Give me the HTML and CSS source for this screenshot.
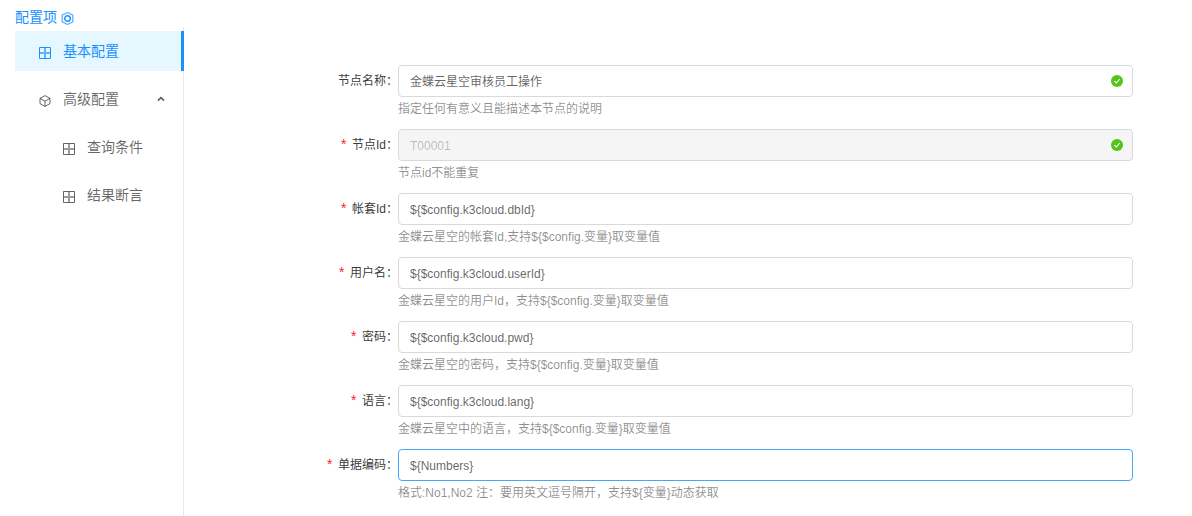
FILE: index.html
```html
<!DOCTYPE html>
<html lang="zh-CN">
<head>
<meta charset="utf-8">
<title>配置项</title>
<link rel="stylesheet" href="styles.css">
</head>
<body>
<div class="page">
  <h3 class="title">配置项
    <svg class="title-icon" viewBox="0 0 12 12"><path d="M6 .5 10.9 3v6L6 11.5 1.1 9V3z" fill="none" stroke="currentColor" stroke-width="1.2" opacity=".7"/><circle cx="6" cy="6" r="2.6" fill="none" stroke="currentColor" stroke-width="1.3"/></svg>
  </h3>
  <div class="main">
    <nav class="sider">
      <ul class="menu">
        <li class="item active">
          <svg class="ico" viewBox="0 0 12 12"><path d="M.5.5h11v11H.5z" fill="none" stroke="currentColor"/><path d="M6 1v10M1 6h10" fill="none" stroke="currentColor" stroke-width="2" opacity=".65"/></svg>
          <span class="item-text">基本配置</span>
        </li>
        <li class="item">
          <svg class="ico" viewBox="0 0 12 12"><path d="M6 .6 11 3.4v5.2L6 11.4 1 8.6V3.4zM1 3.4 6 6.2l5-2.8M6 6.2v5.2" fill="none" stroke="currentColor"/></svg>
          <span class="item-text">高级配置</span>
          <svg class="arrow" viewBox="0 0 8 6"><path d="M1 4.6 4 1.6l3 3" fill="none" stroke="currentColor" stroke-width="1.5"/></svg>
        </li>
        <li class="item sub">
          <svg class="ico" viewBox="0 0 12 12"><path d="M.5.5h11v11H.5z" fill="none" stroke="currentColor"/><path d="M6 1v10M1 6h10" fill="none" stroke="currentColor" stroke-width="2" opacity=".65"/></svg>
          <span class="item-text">查询条件</span>
        </li>
        <li class="item sub">
          <svg class="ico" viewBox="0 0 12 12"><path d="M.5.5h11v11H.5z" fill="none" stroke="currentColor"/><path d="M6 1v10M1 6h10" fill="none" stroke="currentColor" stroke-width="2" opacity=".65"/></svg>
          <span class="item-text">结果断言</span>
        </li>
      </ul>
    </nav>
    <form class="form">
      <div class="row">
        <label class="label">节点名称：</label>
        <div class="control">
          <div class="input"><span class="cjk">金蝶云星空审核员工操作</span><svg class="check" viewBox="0 0 14 14"><circle cx="7" cy="7" r="6" fill="#52c41a"/><path d="M4.4 7.1 6.3 9l3.4-3.8" fill="none" stroke="#fff" stroke-width="1.1"/></svg></div>
          <div class="help">指定任何有意义且能描述本节点的说明</div>
        </div>
      </div>
      <div class="row">
        <label class="label req">节点Id：</label>
        <div class="control">
          <div class="input disabled"><span class="latin">T00001</span><svg class="check" viewBox="0 0 14 14"><circle cx="7" cy="7" r="6" fill="#52c41a"/><path d="M4.4 7.1 6.3 9l3.4-3.8" fill="none" stroke="#fff" stroke-width="1.1"/></svg></div>
          <div class="help">节点id不能重复</div>
        </div>
      </div>
      <div class="row">
        <label class="label req">帐套Id：</label>
        <div class="control">
          <div class="input"><span class="latin">${$config.k3cloud.dbId}</span></div>
          <div class="help">金蝶云星空的帐套Id,支持${$config.变量}取变量值</div>
        </div>
      </div>
      <div class="row">
        <label class="label req">用户名：</label>
        <div class="control">
          <div class="input"><span class="latin">${$config.k3cloud.userId}</span></div>
          <div class="help">金蝶云星空的用户Id，支持${$config.变量}取变量值</div>
        </div>
      </div>
      <div class="row">
        <label class="label req">密码：</label>
        <div class="control">
          <div class="input"><span class="latin">${$config.k3cloud.pwd}</span></div>
          <div class="help">金蝶云星空的密码，支持${$config.变量}取变量值</div>
        </div>
      </div>
      <div class="row">
        <label class="label req">语言：</label>
        <div class="control">
          <div class="input"><span class="latin">${$config.k3cloud.lang}</span></div>
          <div class="help">金蝶云星空中的语言，支持${$config.变量}取变量值</div>
        </div>
      </div>
      <div class="row">
        <label class="label req">单据编码：</label>
        <div class="control">
          <div class="input focused"><span class="latin">${Numbers}</span></div>
          <div class="help">格式:No1,No2 注：要用英文逗号隔开，支持${变量}动态获取</div>
        </div>
      </div>
    </form>
  </div>
</div>
</body>
</html>
```

FILE: styles.css
```css
* { box-sizing: border-box; }
html, body { margin: 0; height: 100%; overflow: hidden; background: #fff; }
body {
  font-family: "Liberation Sans", "Noto Sans CJK SC", sans-serif;
  font-size: 12px;
  color: rgba(0, 0, 0, .65);
}
.page { height: 516px; padding-left: 15px; display: flex; flex-direction: column; }
.title {
  margin: 0;
  height: 27px;
  padding-top: 6px;
  font-size: 14px;
  line-height: 18px;
  font-weight: 400;
  color: #1890ff;
  display: flex;
  align-items: center;
  gap: 4px;
}
.title-icon { width: 13px; height: 13px; margin-top: 3px; flex: none; }
.main { flex: 1; display: flex; min-height: 0; }
.sider { width: 169px; flex: none; border-right: 1px solid #e8e8e8; padding-top: 4px; }
.menu { list-style: none; margin: 0; padding: 0; }
.item {
  position: relative;
  height: 40px;
  margin-bottom: 8px;
  padding-left: 24px;
  display: flex;
  align-items: center;
  font-size: 14px;
  color: rgba(0, 0, 0, .6);
}
.item-text { padding-bottom: 2px; }
.item .ico { width: 12px; height: 12px; margin: 4px 12px 0 0; flex: none; }
.item.sub { padding-left: 48px; }
.active { background: #e6f7ff; color: #1890ff; margin-right: -1px; border-right: 3px solid #1890ff; }
.arrow { position: absolute; left: 142px; top: 17px; width: 8px; height: 6px; color: rgba(0, 0, 0, .65); }
.form { flex: 1; padding: 38px 59px 0 0; min-width: 0; }
.row { display: flex; height: 64px; }
.label {
  width: 214px;
  flex: none;
  height: 32px;
  line-height: 32px;
  text-align: right;
  font-size: 12px;
  color: rgba(0, 0, 0, .8);
}
.req::before {
  content: "*";
  display: inline-block;
  color: #f5222d;
  margin-right: 4px;
  font-family: "Liberation Mono", monospace;
  font-size: 14px;
  line-height: 1;
  transform: translateY(1px);
}
.control { flex: 1; min-width: 0; }
.input {
  height: 32px;
  border: 1px solid #d9d9d9;
  border-radius: 4px;
  padding: 0 11px;
  display: flex;
  align-items: center;
  justify-content: space-between;
  color: rgba(0, 0, 0, .62);
}
.cjk { padding-bottom: 2px; }
.latin { padding-top: 2px; }
.input.disabled { background: #f5f5f5; color: rgba(0, 0, 0, .25); }
.input.focused { border-color: #40a9ff; }
.check { width: 14px; height: 14px; margin-right: -3px; flex: none; }
.help { height: 24px; line-height: 24px; color: rgba(0, 0, 0, .45); font-size: 12px; }
```
